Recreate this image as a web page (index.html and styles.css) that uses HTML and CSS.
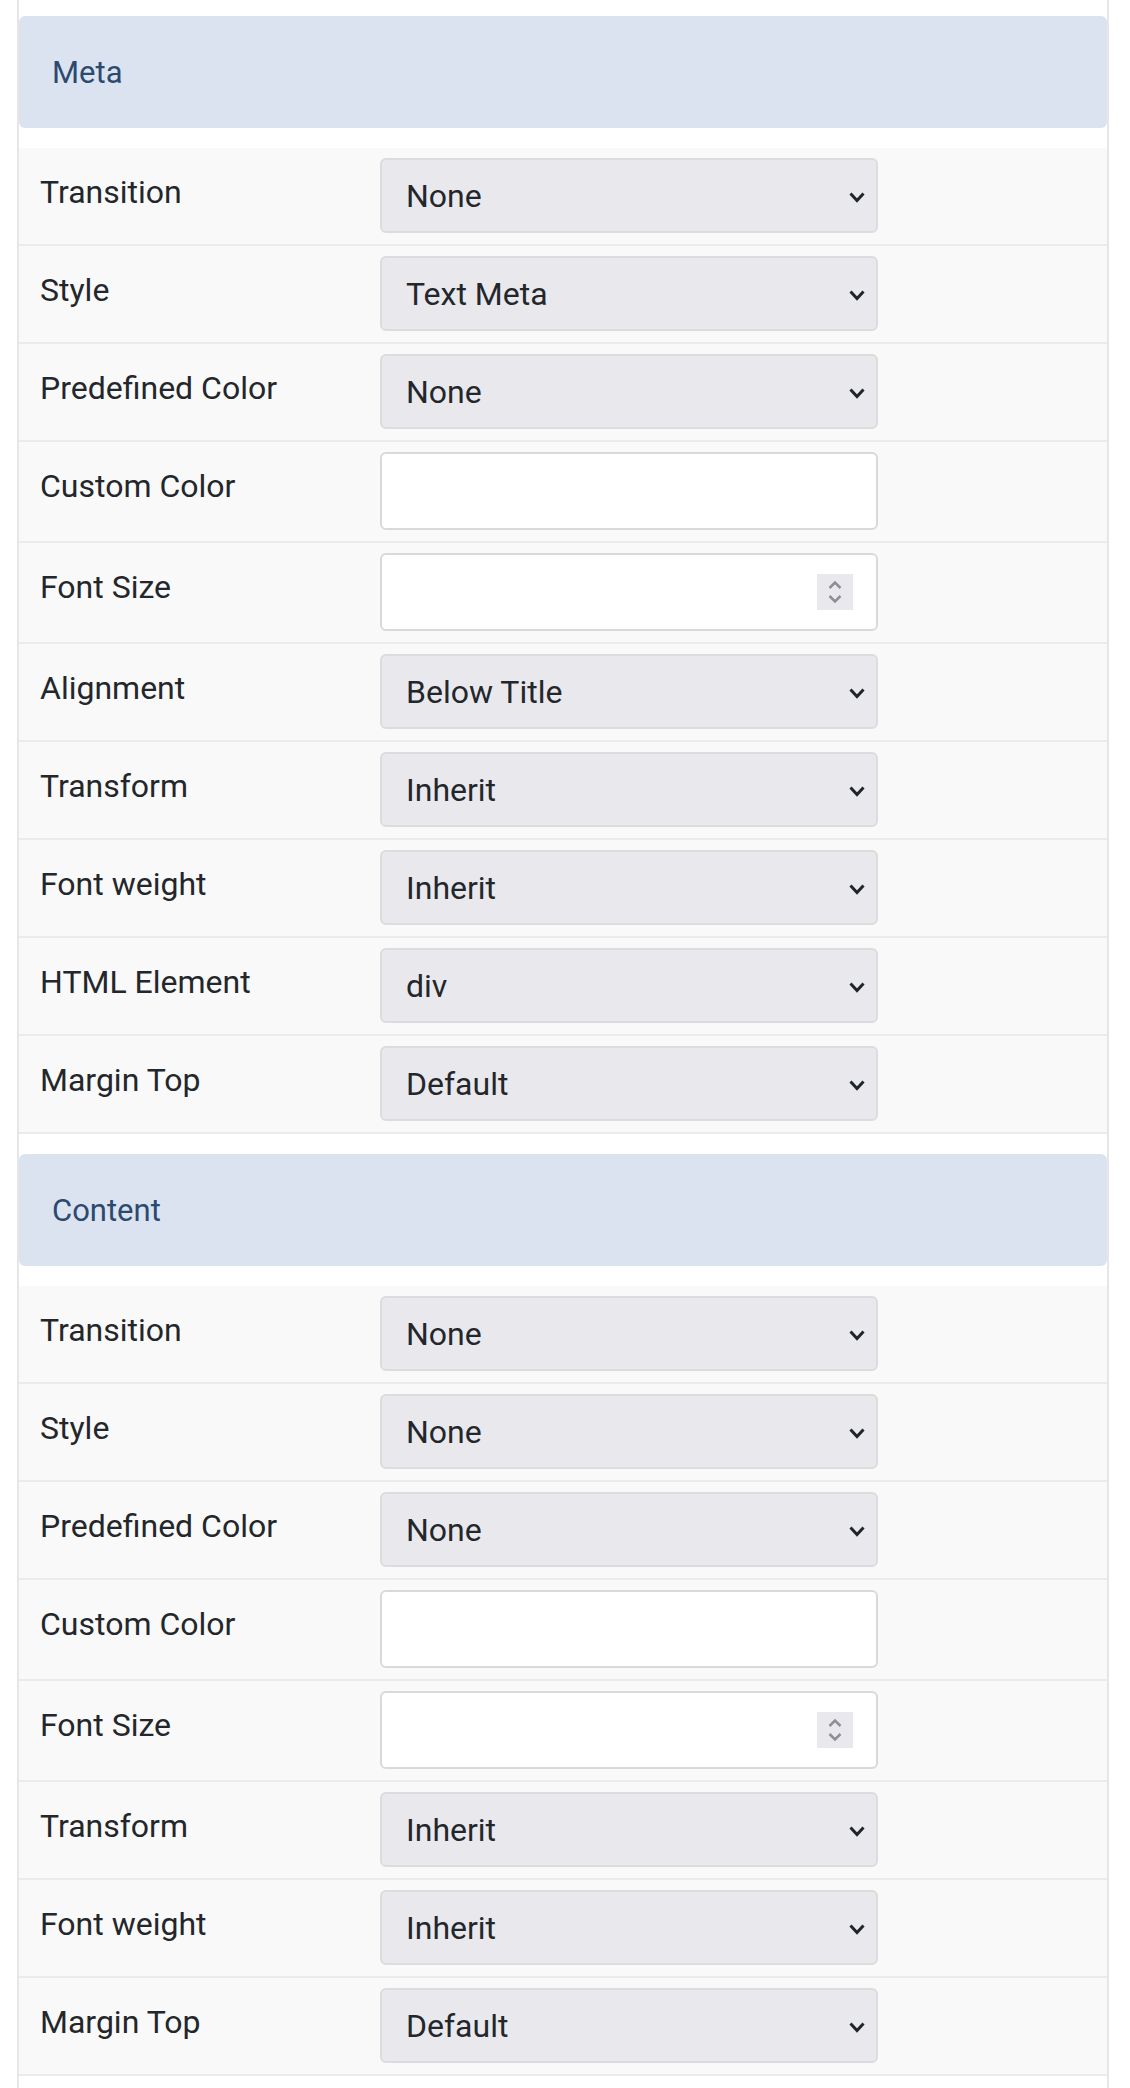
FILE: index.html
```html
<!DOCTYPE html>
<html lang="en">
<head>
<meta charset="utf-8">
<title>Meta / Content settings</title>
<link rel="stylesheet" href="styles.css">
</head>
<body>
<div class="panel">
  <section class="group">
    <h2 class="group-title">Meta</h2>
    <div class="row"><label class="label">Transition</label><div class="select"><span>None</span><svg class="chev" viewBox="0 0 16 11" width="16" height="11"><path d="M1.5 1.5 L8 8.5 L14.5 1.5"/></svg></div></div>
    <div class="row"><label class="label">Style</label><div class="select"><span>Text Meta</span><svg class="chev" viewBox="0 0 16 11" width="16" height="11"><path d="M1.5 1.5 L8 8.5 L14.5 1.5"/></svg></div></div>
    <div class="row"><label class="label">Predefined Color</label><div class="select"><span>None</span><svg class="chev" viewBox="0 0 16 11" width="16" height="11"><path d="M1.5 1.5 L8 8.5 L14.5 1.5"/></svg></div></div>
    <div class="row"><label class="label">Custom Color</label><div class="input"></div></div>
    <div class="row"><label class="label">Font Size</label><div class="input"><span class="spin"><svg viewBox="0 0 14 24" width="14" height="24"><path d="M1.5 8 L7 2.5 L12.5 8"/><path d="M1.5 16 L7 21.5 L12.5 16"/></svg></span></div></div>
    <div class="row"><label class="label">Alignment</label><div class="select"><span>Below Title</span><svg class="chev" viewBox="0 0 16 11" width="16" height="11"><path d="M1.5 1.5 L8 8.5 L14.5 1.5"/></svg></div></div>
    <div class="row"><label class="label">Transform</label><div class="select"><span>Inherit</span><svg class="chev" viewBox="0 0 16 11" width="16" height="11"><path d="M1.5 1.5 L8 8.5 L14.5 1.5"/></svg></div></div>
    <div class="row"><label class="label">Font weight</label><div class="select"><span>Inherit</span><svg class="chev" viewBox="0 0 16 11" width="16" height="11"><path d="M1.5 1.5 L8 8.5 L14.5 1.5"/></svg></div></div>
    <div class="row"><label class="label">HTML Element</label><div class="select"><span>div</span><svg class="chev" viewBox="0 0 16 11" width="16" height="11"><path d="M1.5 1.5 L8 8.5 L14.5 1.5"/></svg></div></div>
    <div class="row"><label class="label">Margin Top</label><div class="select"><span>Default</span><svg class="chev" viewBox="0 0 16 11" width="16" height="11"><path d="M1.5 1.5 L8 8.5 L14.5 1.5"/></svg></div></div>
  </section>
  <section class="group group-next">
    <h2 class="group-title">Content</h2>
    <div class="row"><label class="label">Transition</label><div class="select"><span>None</span><svg class="chev" viewBox="0 0 16 11" width="16" height="11"><path d="M1.5 1.5 L8 8.5 L14.5 1.5"/></svg></div></div>
    <div class="row"><label class="label">Style</label><div class="select"><span>None</span><svg class="chev" viewBox="0 0 16 11" width="16" height="11"><path d="M1.5 1.5 L8 8.5 L14.5 1.5"/></svg></div></div>
    <div class="row"><label class="label">Predefined Color</label><div class="select"><span>None</span><svg class="chev" viewBox="0 0 16 11" width="16" height="11"><path d="M1.5 1.5 L8 8.5 L14.5 1.5"/></svg></div></div>
    <div class="row"><label class="label">Custom Color</label><div class="input"></div></div>
    <div class="row"><label class="label">Font Size</label><div class="input"><span class="spin"><svg viewBox="0 0 14 24" width="14" height="24"><path d="M1.5 8 L7 2.5 L12.5 8"/><path d="M1.5 16 L7 21.5 L12.5 16"/></svg></span></div></div>
    <div class="row"><label class="label">Transform</label><div class="select"><span>Inherit</span><svg class="chev" viewBox="0 0 16 11" width="16" height="11"><path d="M1.5 1.5 L8 8.5 L14.5 1.5"/></svg></div></div>
    <div class="row"><label class="label">Font weight</label><div class="select"><span>Inherit</span><svg class="chev" viewBox="0 0 16 11" width="16" height="11"><path d="M1.5 1.5 L8 8.5 L14.5 1.5"/></svg></div></div>
    <div class="row"><label class="label">Margin Top</label><div class="select"><span>Default</span><svg class="chev" viewBox="0 0 16 11" width="16" height="11"><path d="M1.5 1.5 L8 8.5 L14.5 1.5"/></svg></div></div>
  </section>
</div>
</body>
</html>
```
FILE: styles.css
```css
html, body {
  margin: 0;
  padding: 0;
  background: #ffffff;
}
body {
  font-family: Roboto, "Noto Sans", "Liberation Sans", sans-serif;
  color: #212529;
}
.panel {
  margin: 0 21px 0 17px;
  border-left: 2px solid #e6e6e6;
  border-right: 2px solid #e6e6e6;
  padding: 16px 0 40px;
  min-height: 2088px;
  box-sizing: border-box;
}
.group-next {
  margin-top: 20px;
}
.group-title {
  margin: 0 0 20px;
  height: 112px;
  box-sizing: border-box;
  display: flex;
  align-items: center;
  padding-left: 33px;
  background: #dce3f0;
  border-radius: 6px;
  font-size: 31px;
  font-weight: 400;
  color: #2c4a70;
}
.row {
  display: grid;
  grid-template-columns: 361px 498px;
  align-items: start;
  padding: 10px 0 11px;
  background: #f9f9f9;
  border-bottom: 2px solid #ebebeb;
}
.label {
  padding: 10px 0 0 21px;
  font-size: 32px;
  line-height: 48px;
  color: #23272b;
}
.select {
  height: 75px;
  box-sizing: border-box;
  display: flex;
  align-items: center;
  justify-content: space-between;
  padding: 0 11px 0 24px;
  background: #e9e9ed;
  border: 2px solid #dcdcdf;
  border-radius: 6px;
  font-size: 32px;
  color: #23272b;
}
.chev {
  margin-top: 3px;
}
.chev path {
  fill: none;
  stroke: #212529;
  stroke-width: 3;
}
.input {
  height: 78px;
  box-sizing: border-box;
  display: flex;
  align-items: center;
  justify-content: flex-end;
  padding-right: 23px;
  background: #ffffff;
  border: 2px solid #d9d9dc;
  border-radius: 6px;
}
.spin {
  width: 36px;
  height: 36px;
  display: flex;
  align-items: center;
  justify-content: center;
  background: #e9e9ed;
}
.spin path {
  fill: none;
  stroke: #8e8e9a;
  stroke-width: 2.5;
}
```
